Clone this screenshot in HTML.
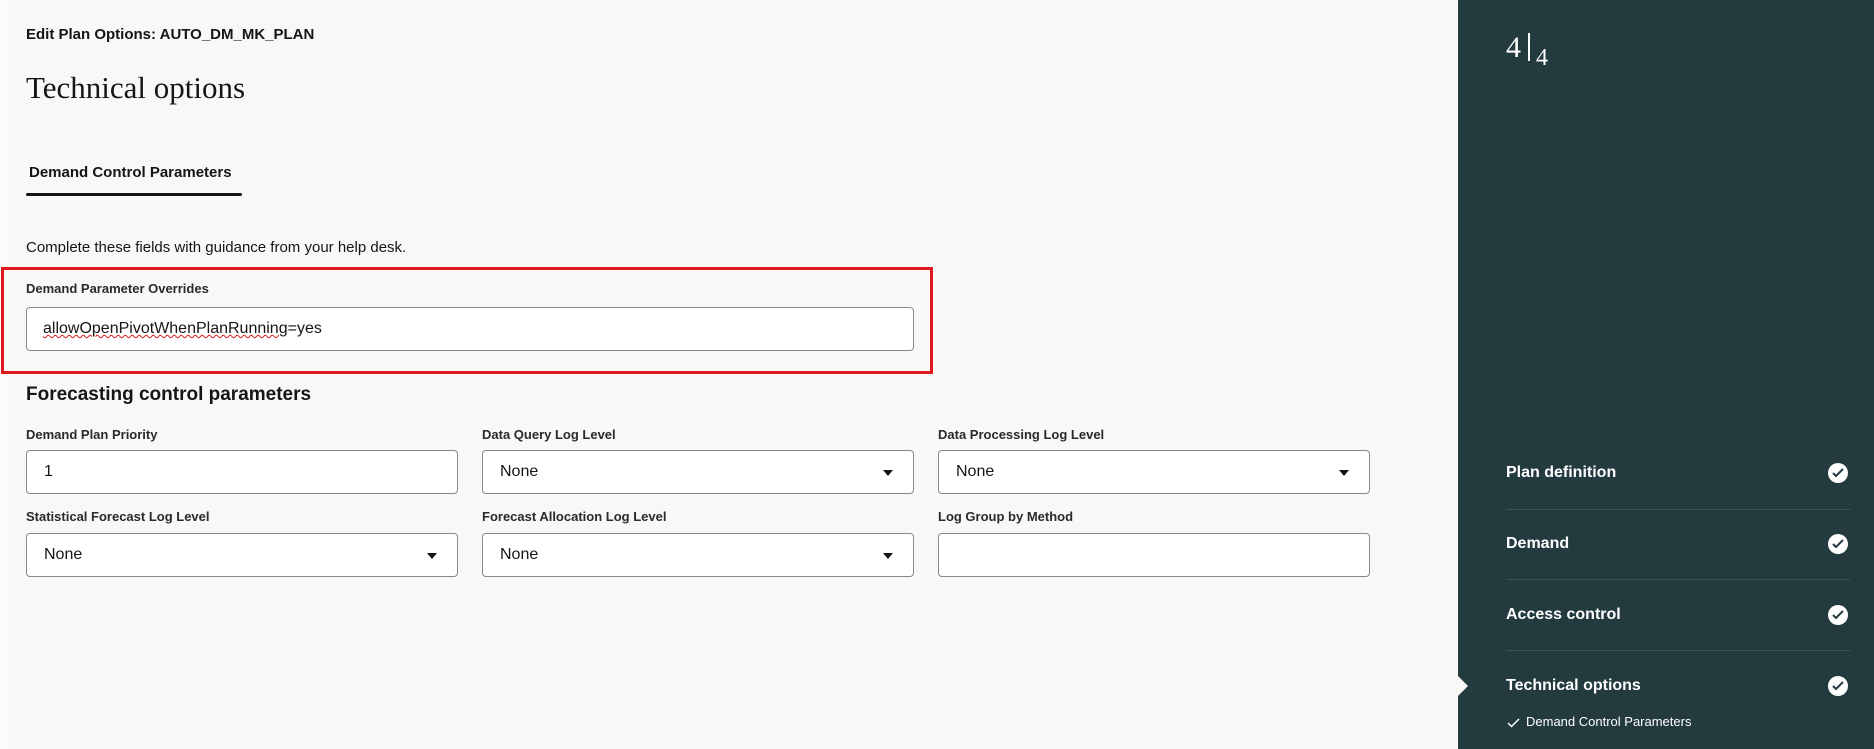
<!DOCTYPE html>
<html><head><meta charset="utf-8"><style>
*{box-sizing:border-box;margin:0;padding:0}
body{width:1874px;height:749px;overflow:hidden;background:#f9f8f6;font-family:"Liberation Sans",sans-serif;color:#161513;position:relative}
.a{position:absolute;white-space:nowrap}
.strip{left:0;top:0;width:8px;height:749px;background:#fcfcfb}
.inp{position:absolute;background:#fff;border:1px solid #8a8885;border-radius:4px;height:44px;font-size:16px;padding-left:17px;line-height:42px}
.lbl{font-size:13px;font-weight:bold;color:#2b2a28}
.arr{position:absolute;width:0;height:0;border-left:5px solid transparent;border-right:5px solid transparent;border-top:6px solid #161513;top:19px}
.side{left:1458px;top:0;width:416px;height:749px;background:#233a3f}
.it{position:absolute;left:48px;color:#fff;font-size:16px;font-weight:bold}
.sep{position:absolute;left:48px;width:344px;height:1px;background:#3d5257}
.ck{position:absolute;left:370px;width:20px;height:20px;border-radius:50%;background:#fff}
.ck svg{position:absolute;left:4px;top:5px}
</style></head><body>
<div class="a strip"></div>
<div class="a" style="left:26px;top:26px;font-size:15px;font-weight:bold;color:#161513">Edit Plan Options: AUTO_DM_MK_PLAN</div>
<div class="a" style="left:26px;top:70px;font-family:'Liberation Serif',serif;font-size:31px">Technical options</div>
<div class="a" style="left:29px;top:164px;font-size:15px;font-weight:bold;color:#161513">Demand Control Parameters</div>
<div class="a" style="left:26px;top:193px;width:216px;height:3px;background:#161513;border-radius:2px"></div>
<div class="a" style="left:26px;top:239px;font-size:15px">Complete these fields with guidance from your help desk.</div>
<div class="a" style="left:1px;top:267px;width:932px;height:107px;border:3px solid #e0191c"></div>
<div class="a lbl" style="left:26px;top:281px">Demand Parameter Overrides</div>
<div class="inp" style="left:26px;top:307px;width:888px;padding-left:16px"><span style="text-decoration:underline wavy #e0191c;text-decoration-thickness:1px">allowOpenPivotWhenPlanRunning</span>=yes</div>
<div class="a" style="left:26px;top:384px;font-size:19px;font-weight:bold">Forecasting control parameters</div>
<div class="a lbl" style="left:26px;top:427px">Demand Plan Priority</div>
<div class="a lbl" style="left:482px;top:427px">Data Query Log Level</div>
<div class="a lbl" style="left:938px;top:427px">Data Processing Log Level</div>
<div class="inp" style="left:26px;top:450px;width:432px">1</div>
<div class="inp" style="left:482px;top:450px;width:432px">None<div class="arr" style="left:400px"></div></div>
<div class="inp" style="left:938px;top:450px;width:432px">None<div class="arr" style="left:400px"></div></div>
<div class="a lbl" style="left:26px;top:509px">Statistical Forecast Log Level</div>
<div class="a lbl" style="left:482px;top:509px">Forecast Allocation Log Level</div>
<div class="a lbl" style="left:938px;top:509px">Log Group by Method</div>
<div class="inp" style="left:26px;top:533px;width:432px">None<div class="arr" style="left:400px"></div></div>
<div class="inp" style="left:482px;top:533px;width:432px">None<div class="arr" style="left:400px"></div></div>
<div class="inp" style="left:938px;top:533px;width:432px"></div>
<div class="a side">
 <div class="a" style="left:48px;top:31px;color:#fff;font-family:'Liberation Serif',serif;font-size:30px">4</div>
 <div class="a" style="left:70px;top:33px;width:2px;height:28px;background:#fff"></div>
 <div class="a" style="left:78px;top:45px;color:#fff;font-family:'Liberation Serif',serif;font-size:24px">4</div>
 <div class="it" style="top:464px">Plan definition</div><div class="ck" style="top:463px"><svg width="12" height="10"><path d="M1 5l3 3 7-7" stroke="#233a3f" stroke-width="2" fill="none"/></svg></div>
 <div class="sep" style="top:509px"></div>
 <div class="it" style="top:535px">Demand</div><div class="ck" style="top:534px"><svg width="12" height="10"><path d="M1 5l3 3 7-7" stroke="#233a3f" stroke-width="2" fill="none"/></svg></div>
 <div class="sep" style="top:579px"></div>
 <div class="it" style="top:606px">Access control</div><div class="ck" style="top:605px"><svg width="12" height="10"><path d="M1 5l3 3 7-7" stroke="#233a3f" stroke-width="2" fill="none"/></svg></div>
 <div class="sep" style="top:650px"></div>
 <div class="it" style="top:677px">Technical options</div><div class="ck" style="top:676px"><svg width="12" height="10"><path d="M1 5l3 3 7-7" stroke="#233a3f" stroke-width="2" fill="none"/></svg></div>
 <div class="a" style="left:0;top:676px;width:0;height:0;border-top:10px solid transparent;border-bottom:10px solid transparent;border-left:10px solid #f9f8f6"></div>
 <svg class="a" style="left:49px;top:718px" width="14" height="10"><path d="M1 5l3.5 3.5L12 1" stroke="#fff" stroke-width="1.5" fill="none"/></svg>
 <div class="a" style="left:68px;top:714px;color:#fff;font-size:13px">Demand Control Parameters</div>
</div>
</body></html>
